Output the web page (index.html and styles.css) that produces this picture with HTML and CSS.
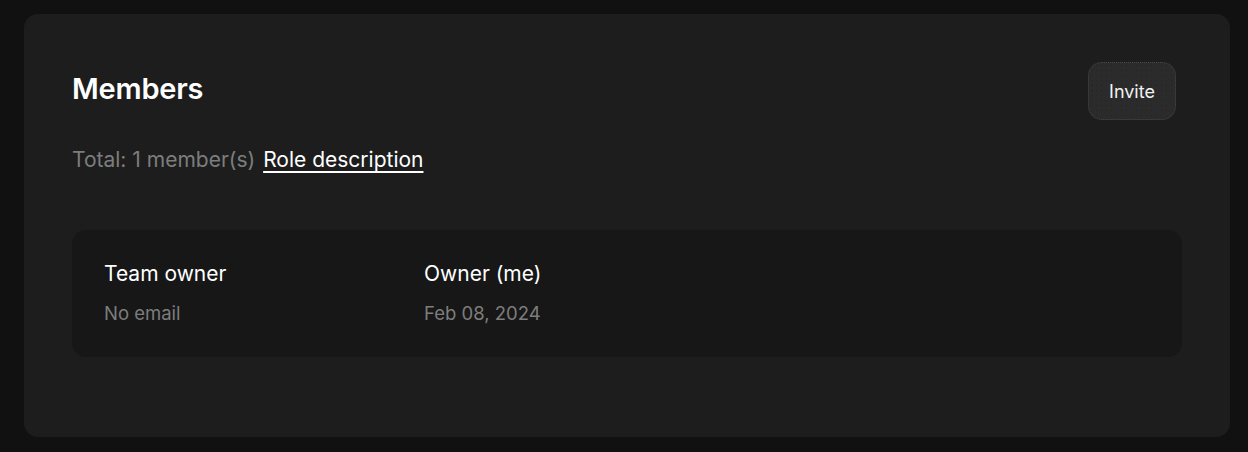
FILE: index.html
```html
<!DOCTYPE html>
<html lang="en">
<head>
    <meta name="viewport" content="width=device-width, initial-scale=1.0" />
    <title>Members</title>
    <link rel="stylesheet" href="styles.css">
</head>
<body>
    <section class="card">
        <div class="card-head">
            <h2>Members</h2>
            <button class="invite-btn">Invite</button>
        </div>
        <p class="summary">
            <span class="total">Total: 1 member(s)</span>
            <a href="#" class="role-link">Role description</a>
        </p>

        <div class="member-list">
            <div class="member-row">
                <div class="member-col name-col">
                    <div class="main">Team owner</div>
                    <div class="sub">No email</div>
                </div>
                <div class="member-col">
                    <div class="main">Owner (me)</div>
                    <div class="sub">Feb 08, 2024</div>
                </div>
            </div>
        </div>
    </section>
</body>
</html>
```

FILE: styles.css
```css
* {
    padding: 0;
    margin: 0;
    box-sizing: border-box;
    font-family: "Inter", "Noto Sans", sans-serif;
}

body {
    background-color: #111111;
    padding: 14px 18px 15px 24px;
}

.card {
    background-color: #1d1d1d;
    border-radius: 14px;
    padding: 48px 48px 80px 48px;
}

.card-head {
    display: flex;
    justify-content: space-between;
    align-items: center;
}

    .card-head h2 {
        font-size: 29px;
        font-weight: 600;
        color: #ffffff;
        letter-spacing: -0.2px;
        margin-top: -6px;
    }

.invite-btn {
    width: 88px;
    height: 58px;
    margin-right: 6px;
    border: 1px dotted #474747;
    border-radius: 14px;
    background-color: #2b2b2b;
    background-image: radial-gradient(circle, #222222 0.7px, transparent 1px);
    background-size: 5px 5px;
    color: #f2f2f2;
    font-size: 18px;
    cursor: pointer;
}

.summary {
    margin-top: 24px;
    font-size: 21px;
    line-height: 32px;
}

    .summary .total {
        color: #7d7d7d;
    }

    .summary .role-link {
        color: #ffffff;
        margin-left: 2px;
        text-decoration: underline;
        text-decoration-thickness: 1.5px;
        text-underline-offset: 4px;
    }

.member-list {
    margin-top: 54px;
}

.member-row {
    display: flex;
    background-color: #171717;
    border-radius: 14px;
    padding: 31px 32px 32px 32px;
}

.member-col {
    display: flex;
    flex-direction: column;
    gap: 14px;
}

.name-col {
    width: 320px;
}

.member-col .main {
    font-size: 21px;
    line-height: 26px;
    color: #ffffff;
}

.member-col .sub {
    font-size: 18.5px;
    line-height: 24px;
    color: #7d7d7d;
}
```
